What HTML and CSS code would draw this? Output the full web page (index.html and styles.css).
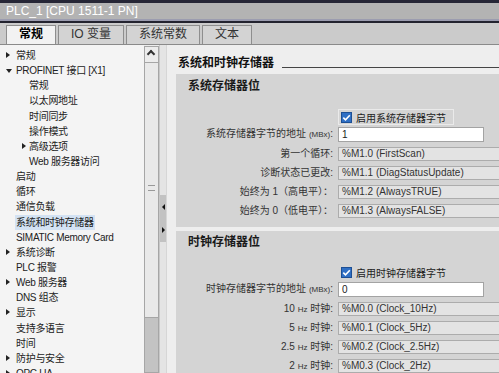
FILE: index.html
```html
<!DOCTYPE html>
<html lang="zh">
<head>
    <meta charset="UTF-8">
    <title>PLC_1 属性</title>
    <link rel="stylesheet" href="styles.css">
</head>
<body>

    <div class="window">
        <div class="titlebar">PLC_1 [CPU 1511-1 PN]</div>

        <div class="tabs">
            <div class="tab active">常规</div>
            <div class="tab">IO 变量</div>
            <div class="tab">系统常数</div>
            <div class="tab">文本</div>
        </div>

        <div class="main">
            <ul class="nav">
                <li><span class="tw closed"></span>常规</li>
                <li><span class="tw open"></span>PROFINET 接口 [X1]</li>
                <li class="sub">常规</li>
                <li class="sub">以太网地址</li>
                <li class="sub">时间同步</li>
                <li class="sub">操作模式</li>
                <li class="sub"><span class="tw closed"></span>高级选项</li>
                <li class="sub">Web 服务器访问</li>
                <li>启动</li>
                <li>循环</li>
                <li>通信负载</li>
                <li><span class="selected">系统和时钟存储器</span></li>
                <li>SIMATIC Memory Card</li>
                <li><span class="tw closed"></span>系统诊断</li>
                <li>PLC 报警</li>
                <li><span class="tw closed"></span>Web 服务器</li>
                <li>DNS 组态</li>
                <li><span class="tw closed"></span>显示</li>
                <li>支持多语言</li>
                <li>时间</li>
                <li><span class="tw closed"></span>防护与安全</li>
                <li><span class="tw closed"></span>OPC UA</li>
            </ul>

            <div class="vscroll">
                <div class="scroll-up"></div>
                <div class="scroll-thumb"><span class="grip"></span></div>
            </div>

            <div class="splitter">
                <div class="splitter-handle">
                    <span class="arrow-left"></span>
                    <span class="arrow-right"></span>
                </div>
            </div>

            <div class="content">
                <div class="section-title">系统和时钟存储器</div>

                <div class="panel">
                    <div class="panel-title">系统存储器位</div>
                    <div class="check-row">
                        <label class="check focused">
                            <svg class="box" width="11" height="11" viewBox="0 0 11 11">
                                <rect x="0.5" y="0.5" width="10" height="10" fill="#2f6fc4" stroke="#1d4f94"/>
                                <path d="M2.3 5.6 L4.5 7.8 L8.8 3.2" fill="none" stroke="#fff" stroke-width="1.6"/>
                            </svg>
                            启用系统存储器字节
                        </label>
                    </div>
                    <div class="row addr">
                        <span class="label">系统存储器字节的地址 <small>(MBx)</small>:</span>
                        <span class="input">1</span>
                    </div>
                    <div class="row">
                        <span class="label">第一个循环:</span>
                        <span class="field">%M1.0 (FirstScan)</span>
                    </div>
                    <div class="row">
                        <span class="label">诊断状态已更改:</span>
                        <span class="field">%M1.1 (DiagStatusUpdate)</span>
                    </div>
                    <div class="row">
                        <span class="label">始终为 1（高电平）：</span>
                        <span class="field">%M1.2 (AlwaysTRUE)</span>
                    </div>
                    <div class="row">
                        <span class="label">始终为 0（低电平）：</span>
                        <span class="field">%M1.3 (AlwaysFALSE)</span>
                    </div>
                </div>

                <div class="panel clock">
                    <div class="panel-title">时钟存储器位</div>
                    <div class="check-row">
                        <label class="check">
                            <svg class="box" width="11" height="11" viewBox="0 0 11 11">
                                <rect x="0.5" y="0.5" width="10" height="10" fill="#2f6fc4" stroke="#1d4f94"/>
                                <path d="M2.3 5.6 L4.5 7.8 L8.8 3.2" fill="none" stroke="#fff" stroke-width="1.6"/>
                            </svg>
                            启用时钟存储器字节
                        </label>
                    </div>
                    <div class="row addr">
                        <span class="label">时钟存储器字节的地址 <small>(MBx)</small>:</span>
                        <span class="input">0</span>
                    </div>
                    <div class="row">
                        <span class="label">10 <small>Hz</small> 时钟:</span>
                        <span class="field">%M0.0 (Clock_10Hz)</span>
                    </div>
                    <div class="row">
                        <span class="label">5 <small>Hz</small> 时钟:</span>
                        <span class="field">%M0.1 (Clock_5Hz)</span>
                    </div>
                    <div class="row">
                        <span class="label">2.5 <small>Hz</small> 时钟:</span>
                        <span class="field">%M0.2 (Clock_2.5Hz)</span>
                    </div>
                    <div class="row">
                        <span class="label">2 <small>Hz</small> 时钟:</span>
                        <span class="field">%M0.3 (Clock_2Hz)</span>
                    </div>
                </div>
            </div>
        </div>
    </div>

</body>
</html>
```

FILE: styles.css
```css
/* TIA Portal style property window */
body {
    margin: 0;
    font-family: "Liberation Sans", "Noto Sans CJK SC", sans-serif;
    font-size: 10px;
    color: #222;
    background: #ededed;
}

.window {
    width: 499px;
    height: 373px;
    overflow: hidden;
    display: flex;
    flex-direction: column;
}

.titlebar {
    height: 16px;
    line-height: 16px;
    padding-left: 6px;
    background: #b3b3b3;
    border-top: 3px solid #262636;
    border-bottom: 2px solid #9b9caf;
    color: #fff;
    font-size: 12px;
}

.tabs {
    height: 19px;
    padding: 2px 0 0 6px;
    display: flex;
    gap: 2px;
    background: #cbcbcb;
    border-top: 2px solid #23232f;
    border-bottom: 1px solid #8a8a8a;
}

.tab {
    padding: 0 12px;
    line-height: 17px;
    font-size: 12px;
    color: #333;
    background: #d3d3d3;
    border: 1px solid #8e8e8e;
    border-bottom: none;
}

.tab.active {
    background: #f2f2f2;
    color: #000;
    font-weight: bold;
}

.main {
    flex: 1;
    display: flex;
    min-height: 0;
}

/* navigation tree */
.nav {
    width: 144px;
    flex-shrink: 0;
    margin: 0;
    padding: 3px 0 0 0;
    list-style: none;
    background: #f4f4f4;
    overflow: hidden;
    letter-spacing: -0.3px;
}

.nav li {
    position: relative;
    height: 15.15px;
    line-height: 15.15px;
    padding-left: 16px;
    white-space: nowrap;
}

.nav li.sub {
    padding-left: 29px;
}

.tw {
    position: absolute;
    top: 4px;
    width: 0;
    height: 0;
}

.nav li .tw { left: 6px; }
.nav li.sub .tw { left: 22px; }

.tw.closed {
    border-left: 4px solid #222;
    border-top: 3.5px solid transparent;
    border-bottom: 3.5px solid transparent;
}

.tw.open {
    top: 6px;
    border-top: 4px solid #222;
    border-left: 3.5px solid transparent;
    border-right: 3.5px solid transparent;
}

.selected {
    display: inline-block;
    margin-left: -1px;
    padding: 0 1px;
    background: #d3e2f3;
}

/* tree scrollbar */
.vscroll {
    width: 13px;
    flex-shrink: 0;
    margin-top: 1px;
    border: 1px solid #a6a6a6;
    background: #c3c3c3;
    display: flex;
    flex-direction: column;
}

.scroll-up {
    height: 15px;
    background: #ececec;
    border-bottom: 1px solid #a6a6a6;
    position: relative;
}

.scroll-up::after {
    content: "";
    position: absolute;
    left: 3px;
    top: 4px;
    width: 4px;
    height: 4px;
    border-left: 2px solid #333;
    border-top: 2px solid #333;
    transform: rotate(45deg);
}

.scroll-thumb {
    height: 254px;
    background: #e9e9e9;
    border-bottom: 1px solid #a6a6a6;
    display: flex;
    align-items: center;
    justify-content: center;
}

.grip {
    width: 7px;
    height: 4px;
    margin-top: -4px;
    border-top: 1px solid #999;
    border-bottom: 1px solid #999;
}

/* splitter between tree and page */
.splitter {
    width: 6px;
    flex-shrink: 0;
    background: #e4e4e4;
    border-left: 1px solid #c8c8c8;
    padding-top: 150px;
}

.splitter-handle {
    height: 47px;
    background: #c2c2c2;
    display: flex;
    flex-direction: column;
    justify-content: space-around;
    align-items: center;
}

.arrow-left, .arrow-right {
    width: 0;
    height: 0;
    border-top: 3px solid transparent;
    border-bottom: 3px solid transparent;
}

.arrow-left { border-right: 3px solid #111; }
.arrow-right { border-left: 3px solid #111; }

/* property page */
.content {
    flex: 1;
    min-width: 0;
    overflow: hidden;
    padding: 10px 0 0 0;
    border-left: 1px solid #d6d6d6;
    background: #eeeeee;
}

.section-title {
    display: flex;
    align-items: center;
    margin: 0 0 3px 11px;
    line-height: 16px;
    font-size: 12px;
    font-weight: bold;
    color: #111;
    white-space: nowrap;
}

.section-title::after {
    content: "";
    flex: 1;
    height: 1px;
    margin: 8px 0 0 8px;
    background: #444;
}

.panel {
    margin: 0 0 4px 9px;
    padding: 4px 0 9px 0;
    background: #d4d4d4;
}

.panel-title {
    padding-left: 12px;
    line-height: 16px;
    font-size: 12px;
    font-weight: bold;
    color: #1a1a1a;
}

.check-row {
    margin: 15px 0 0 162px;
    height: 16px;
}

.panel.clock .panel-title {
    line-height: 15px;
}

.panel.clock .check-row {
    margin-top: 14px;
}

.check {
    display: inline-flex;
    align-items: center;
    gap: 4px;
    height: 14px;
    padding: 0 7px 0 2px;
    border: 1px solid transparent;
    color: #222;
}

.check.focused {
    border-color: #eaeaea;
}

.row {
    display: flex;
    align-items: center;
    gap: 5px;
    height: 14px;
    margin-top: 5px;
    white-space: nowrap;
}

.row.addr {
    height: 15px;
    margin-top: 2px;
    margin-bottom: 2px;
}

.label {
    width: 157px;
    flex-shrink: 0;
    line-height: 14px;
    text-align: right;
    color: #333;
}

.label small {
    font-size: 8px;
}

.input {
    width: 141px;
    flex-shrink: 0;
    height: 13px;
    line-height: 13px;
    padding-left: 3px;
    background: #fff;
    border: 1px solid #a3a3a3;
}

.field {
    width: 200px;
    flex-shrink: 0;
    height: 12px;
    line-height: 12px;
    padding-left: 3px;
    background: #e3e3e3;
    border: 1px solid #acacac;
    color: #333;
}
```
